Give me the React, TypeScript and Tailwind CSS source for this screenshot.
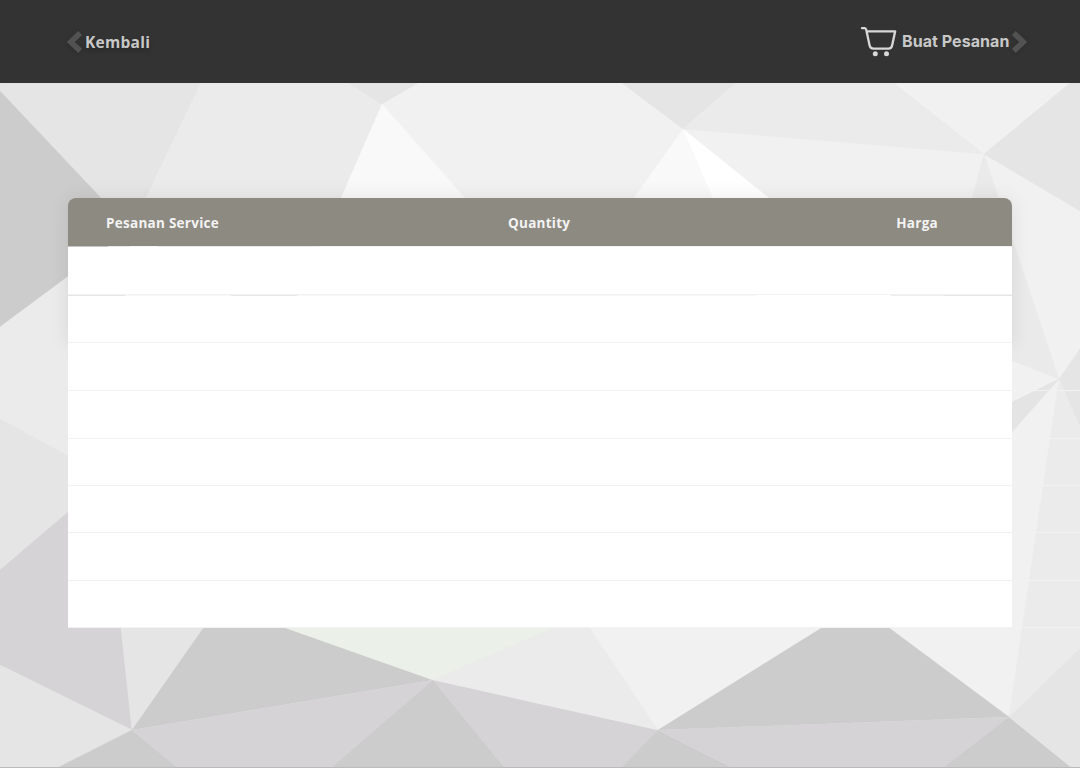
const facets: [string, string][] = [
  ['0,83 201,83 146,198 101,198 0,91', '#e5e5e5'],
  ['201,83 348,83 382,104 341,198 146,198', '#ebebeb'],
  ['348,83 418,83 382,104', '#e5e5e5'],
  ['382,104 465,198 341,198', '#f9f9f9'],
  ['0,91 101,198 101,252 0,327', '#cccccc'],
  ['0,327 101,252 101,474 0,419', '#ebebeb'],
  ['0,419 101,474 101,484 0,570', '#e5e5e5'],
  ['0,570 101,484 121,628 132,730 0,665', '#d5d3d6'],
  ['0,665 132,730 57,768 0,768', '#e5e5e5'],
  ['121,627 204,627 132,730', '#e5e5e5'],
  ['204,627 283,627 433,680 132,730', '#cccccc'],
  ['132,730 178,768 57,768', '#cccccc'],
  ['132,730 433,680 331,768 178,768', '#d5d3d6'],
  ['433,680 505,768 331,768', '#cccccc'],
  ['433,680 658,730 621,768 505,768', '#d5d3d6'],
  ['283,627 556,627 433,680', '#ebf0e8'],
  ['556,627 589,627 658,730 433,680', '#ebebeb'],
  ['658,730 733,768 621,768', '#cccccc'],
  ['823,627 888,627 1009,717 658,730', '#cccccc'],
  ['658,730 1009,717 943,768 733,768', '#d5d3d6'],
  ['1009,717 1072,768 943,768', '#cccccc'],
  ['1009,717 1080,648 1080,768 1072,768', '#e5e5e5'],
  ['622,83 736,83 683,129', '#e5e5e5'],
  ['736,83 894,83 984,154 683,129', '#ebebeb'],
  ['683,129 713,198 634,198', '#f9f9f9'],
  ['683,129 769,198 713,198', '#ffffff'],
  ['1070,83 1080,83 1080,211 984,154', '#e5e5e5'],
  ['984,154 1059,379 1000,356 972,198', '#eaeaea'],
  ['1080,349 1080,427 1059,379', '#e5e5e5'],
  ['1012,402 1059,379 1012,432', '#e4e4e4'],
  ['1059,379 1080,427 1080,648 1009,717', '#ebebeb'],
]

function Backdrop() {
  return (
    <svg className="absolute inset-0" width="1080" height="768" viewBox="0 0 1080 768">
      <rect width="1080" height="768" fill="#f1f1f1" />
      {facets.map(([points, fill]) => (
        <polygon key={points} points={points} fill={fill} stroke={fill} strokeWidth="0.3" />
      ))}
      {[390, 438, 485, 532, 580, 627].map((y) => (
        <rect key={y} x="1012" y={y} width="68" height="1" fill="#f2f2f2" />
      ))}
      <rect y="767" width="1080" height="1" fill="#bbbbbb" />
    </svg>
  )
}

function Chevron({ flip = false }: { flip?: boolean }) {
  return (
    <svg width="16" height="24" viewBox="0 0 16 24" className={flip ? '-scale-x-100 drop-shadow-sm' : 'drop-shadow-sm'}>
      <path d="M14.2 3 4.8 12l9.4 9" fill="none" stroke="#525252" strokeWidth="5.6" />
    </svg>
  )
}

function CartIcon() {
  return (
    <svg width="38" height="32" viewBox="0 0 38 32" fill="none" stroke="#d8d8d8" strokeWidth="2.3" strokeLinecap="round" strokeLinejoin="round">
      <path d="M2 2.2h2.6Q5.9 2.2 6.3 4L9.6 19.6Q10.3 22.6 13.3 22.6H28.6Q31.5 22.6 32.1 19.6L35.2 5.3H6.7" />
      <circle cx="15.3" cy="27.8" r="2.5" fill="#d8d8d8" stroke="none" />
      <circle cx="26.5" cy="27.8" r="2.5" fill="#d8d8d8" stroke="none" />
    </svg>
  )
}

const rows = ['h-[48px]', 'h-[47px]', 'h-[48px]', 'h-[48px]', 'h-[47px]', 'h-[47px]', 'h-[48px]', 'h-[47px]']

function FirstSeam() {
  return (
    <div className="flex h-px bg-[#f4f4f4]">
      <span className="w-10 bg-[#c4c4c4]" />
      <span className="w-[22px] bg-[#e8e8e8]" />
      <span className="w-[27px] bg-[#f6f6f6]" />
      <span className="w-[162px] bg-[#e9e9e9]" />
    </div>
  )
}

function SecondSeam() {
  return (
    <div className="flex h-px bg-[#fbfbfb]">
      <span className="w-[57px] bg-[#e6e6e6]" />
      <span className="w-[106px] bg-[#f8f8f8]" />
      <span className="w-[66px] bg-[#e8e8e8]" />
      <span className="w-[458px] bg-[#f8f8f8]" />
      <span className="w-[136px] bg-white" />
      <span className="w-[53px] bg-[#eeeeee]" />
      <span className="flex-1 bg-[#e6e6e6]" />
    </div>
  )
}

export default function App() {
  return (
    <div className="relative h-[768px] w-[1080px] overflow-hidden font-['Open_Sans',sans-serif]">
      <Backdrop />
      <div className="relative flex h-full flex-col">
        <header className="flex h-[83px] items-start justify-between bg-[#333333] pl-[66px] pr-[52px]">
          <button className="mt-[30px] flex h-6 items-center gap-[3px] text-[15.5px] font-bold tracking-[0.28px] text-[#c8c8c8] [text-shadow:0_3px_4px_#00000040]">
            <Chevron />
            <span className="pt-0.5">Kembali</span>
          </button>
          <button className="mt-[26px] flex h-8 items-center text-[16px] font-bold text-[#c8c8c8]">
            <CartIcon />
            <span className="mb-0.5 ml-1 w-[110px] text-left font-['Inter',sans-serif] tracking-[0.06px]">Buat Pesanan</span>
            <Chevron flip />
          </button>
        </header>
        <main className="px-[68px] pt-[115px]">
          <div className="h-[149px] rounded-t-[8px] shadow-[0_0_20px_#00000015]">
            <div className="flex h-12 items-center rounded-t-[8px] bg-[#8d8a81] pl-[38px] pr-[74px] pt-0.5 text-[13.5px] font-bold tracking-[0.27px] text-[#f3f3f3]">
              <span className="w-[402px]">Pesanan Service</span>
              <span>Quantity</span>
              <span className="flex-1 text-right">Harga</span>
            </div>
            <FirstSeam />
            {rows.map((height, i) => (
              <div key={i}>
                {i === 1 && <SecondSeam />}
                <div className={`${height} border-b border-[#f2f2f2] bg-white`} />
              </div>
            ))}
          </div>
        </main>
      </div>
    </div>
  )
}
